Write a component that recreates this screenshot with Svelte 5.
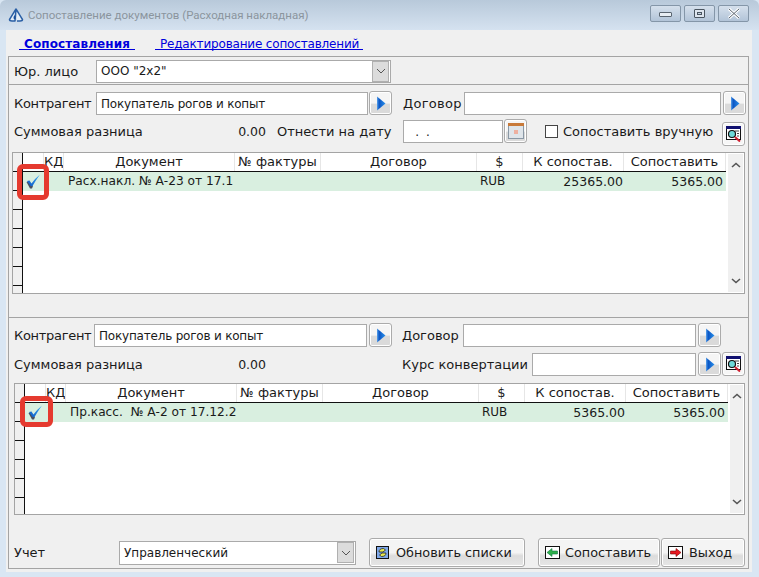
<script lang="ts">
  const columns = [
    { label: '', width: 21 },
    { label: 'КД', width: 20 },
    { label: 'Документ', width: 171 },
    { label: '№ фактуры', width: 86 },
    { label: 'Договор', width: 156 },
    { label: '$', width: 46 },
    { label: 'К сопостав.', width: 101 },
    { label: 'Сопоставить', width: 102 },
  ];

  const gridTemplate = columns.map((c) => c.width + 'px').join(' ');
  const ticks = (n: number) => Array.from({ length: n });
</script>

{#snippet arrowBtn()}
  <button class="btn-sq" aria-label="Выбрать">
    <svg width="10" height="15" viewBox="0 0 10 15">
      <defs>
        <linearGradient id="arr" x1="0" x2="1" y1="0" y2="0">
          <stop offset="0" stop-color="#5aa4ec" />
          <stop offset="0.25" stop-color="#0a55c4" />
          <stop offset="1" stop-color="#2a90ea" />
        </linearGradient>
      </defs>
      <path d="M1 0.5 L9.5 7.5 L1 14.5 Z" fill="url(#arr)" />
    </svg>
  </button>
{/snippet}

{#snippet searchBtn()}
  <button class="btn-sq search" aria-label="Поиск">
    <svg width="16" height="16" viewBox="0 0 16 16">
      <rect x="0.5" y="0.5" width="14" height="13" fill="#fff" stroke="#111" />
      <rect x="0" y="0" width="15" height="3" fill="#101070" />
      <path d="M9 5h4M11 7.5h2M11 10h2" stroke="#444" />
      <circle cx="6" cy="8" r="3.5" fill="#6fdada" stroke="#111" stroke-width="1.2" />
      <path d="M9 11 L14 15.5" stroke="#d02030" stroke-width="2" />
    </svg>
  </button>
{/snippet}

{#snippet chevron()}
  <span class="chevron">
    <svg width="10" height="6" viewBox="0 0 10 6"><path d="M1 1 L5 5 L9 1" fill="none" stroke="#555" stroke-width="1" /></svg>
  </span>
{/snippet}

{#snippet check()}
  <svg class="tick" width="15" height="15" viewBox="0 0 15 15">
    <defs>
      <linearGradient id="chk" x1="0" x2="1" y1="1" y2="0">
        <stop offset="0" stop-color="#0b56c4" />
        <stop offset="1" stop-color="#3fb0f5" />
      </linearGradient>
    </defs>
    <path d="M0.5 8 L3 7.5 L5 10 L7 12 L6 14.5 L4 14.5 Z" fill="#4a4f60" />
    <path d="M1 7 L3.5 6.5 L5.5 9.5 Q9 4.5 14 0.5 Q10 6 6.5 12 L4.5 12 Z" fill="url(#chk)" />
  </svg>
{/snippet}

{#snippet table(kind: string, rowCount: number, doc: string, toMatch: string)}
  <div class="table {kind}">
    <div class="ticks">
      {#each ticks(rowCount) as _}
        <span class="tick-row"></span>
      {/each}
    </div>
    <div class="rows">
      <div class="head" style="grid-template-columns:{gridTemplate}">
        {#each columns as c}
          <span class="th">{c.label}</span>
        {/each}
      </div>
      <div class="row" style="grid-template-columns:{gridTemplate}">
        <span class="td tick-cell">{@render check()}</span>
        <span class="td"></span>
        <span class="td doc">{doc}</span>
        <span class="td"></span>
        <span class="td"></span>
        <span class="td cur">RUB</span>
        <span class="td num">{toMatch}</span>
        <span class="td num last">5365.00</span>
      </div>
    </div>
    <div class="scroll">
      <svg width="10" height="6" viewBox="0 0 10 6"><path d="M1 5 L5 1.5 L9 5" fill="none" stroke="#555" stroke-width="1.6" /></svg>
      <svg width="10" height="6" viewBox="0 0 10 6"><path d="M1 1 L5 4.5 L9 1" fill="none" stroke="#555" stroke-width="1.6" /></svg>
    </div>
    <span class="mark"></span>
  </div>
{/snippet}

<div class="window">
  <header class="titlebar">
    <svg class="app-icon" width="16" height="16" viewBox="0 0 16 16">
      <path d="M8 2 C10 5 12 9 14.5 12.5 Q14.5 14 12 14 H9 M7 14 H4 Q1.5 14 1.5 12.5 C4 9 6 5 8 2 Z" fill="#e4edf6" stroke="#2a5fa5" stroke-width="1.5" stroke-linejoin="round" />
      <path d="M6.5 8 Q4.5 11 6.5 12.5 Q8.5 11 6.5 8 Z" fill="#1b4f9a" />
    </svg>
    <span class="title">Сопоставление документов (Расходная накладная)</span>
    <div class="win-btns">
      <span class="win-btn"><i class="min"></i></span>
      <span class="win-btn"><i class="max"></i></span>
      <span class="win-btn close">
        <svg width="14" height="11" viewBox="0 0 14 11"><path d="M2 1 L12 10 M12 1 L2 10" stroke="#fff" stroke-width="3" /><path d="M2 1 L12 10 M12 1 L2 10" stroke="#5a6570" stroke-width="1" /></svg>
      </span>
    </div>
  </header>

  <main class="body">
    <nav class="tabs">
      <a class="tab active" href="#a">Сопоставления</a>
      <a class="tab" href="#b">Редактирование сопоставлений</a>
    </nav>

    <section class="group org">
      <span class="lbl org-lbl">Юр. лицо</span>
      <div class="select org-select"><span>ООО "2х2"</span>{@render chevron()}</div>
    </section>

    <section class="group top">
      <div class="line l1">
        <span class="lbl party-lbl">Контрагент</span>
        <div class="input party">Покупатель рогов и копыт</div>
        {@render arrowBtn()}
        <span class="lbl contract-lbl">Договор</span>
        <div class="input contract"></div>
        {@render arrowBtn()}
      </div>
      <div class="line l2">
        <span class="lbl diff-lbl">Суммовая разница</span>
        <span class="amount">0.00</span>
        <span class="lbl date-lbl">Отнести на дату</span>
        <div class="input date">&nbsp;&nbsp;.&nbsp;&nbsp;.</div>
        <button class="btn-sq cal" aria-label="Календарь">
          <svg width="16" height="16" viewBox="0 0 16 16">
            <rect x="0.5" y="0.5" width="15" height="15" fill="#dfe5ea" stroke="#8a98a5" />
            <rect x="0" y="0" width="16" height="3" fill="#c87a3a" />
            <rect x="6" y="7" width="4" height="4" fill="#eeb0a0" />
          </svg>
        </button>
        <span class="box"></span>
        <span class="lbl manual">Сопоставить вручную</span>
        {@render searchBtn()}
      </div>
      {@render table('t1', 7, 'Расх.накл. № А-23 от 17.1', '25365.00')}
    </section>

    <section class="group bottom">
      <div class="line l3">
        <span class="lbl party-lbl2">Контрагент</span>
        <div class="input party2">Покупатель рогов и копыт</div>
        {@render arrowBtn()}
        <span class="lbl contract-lbl2">Договор</span>
        <div class="input contract2"></div>
        {@render arrowBtn()}
      </div>
      <div class="line l4">
        <span class="lbl diff-lbl">Суммовая разница</span>
        <span class="amount">0.00</span>
        <span class="lbl rate-lbl">Курс конвертации</span>
        <div class="input rate"></div>
        {@render arrowBtn()}
        {@render searchBtn()}
      </div>
      {@render table('t2', 7, 'Пр.касс.  № А-2 от 17.12.2', '5365.00')}
      <div class="line footer">
        <span class="lbl acc-lbl">Учет</span>
        <div class="select acc-select"><span>Управленческий</span>{@render chevron()}</div>
        <button class="btn refresh">
          <svg width="13" height="13" viewBox="0 0 13 13">
            <rect x="0.5" y="0.5" width="12" height="12" fill="#7fa8e8" stroke="#111" />
            <path d="M3 6 Q3 2.5 7.5 2.5 L9.5 4 L7 6 Z" fill="#e8e850" stroke="#222" stroke-width="0.8" />
            <path d="M10 7 Q10 10.5 5.5 10.5 L3.5 9 L6 7 Z" fill="#e8e850" stroke="#222" stroke-width="0.8" />
          </svg>
          Обновить списки
        </button>
        <button class="btn match">
          <svg width="15" height="15" viewBox="0 0 15 15">
            <rect x="0.5" y="1.5" width="14" height="12" fill="#fff" stroke="#111" />
            <path d="M2 7.5 L7 3.5 V6 H12.5 V9 H7 V11.5 Z" fill="#2eb04a" stroke="#174" stroke-width="0.6" />
          </svg>
          Сопоставить
        </button>
        <button class="btn exit">
          <svg width="15" height="15" viewBox="0 0 15 15">
            <rect x="0.5" y="1.5" width="14" height="12" fill="#fff" stroke="#111" />
            <path d="M13 7.5 L8 3.5 V6 H2.5 V9 H8 V11.5 Z" fill="#e81820" stroke="#700" stroke-width="0.6" />
          </svg>
          Выход
        </button>
      </div>
    </section>
  </main>
</div>

<style>
  :global(body) {
    margin: 0;
    background: #d9e6f3;
  }

  .window {
    width: 759px;
    height: 577px;
    display: flex;
    flex-direction: column;
    background: #d9e6f3;
    font-family: "DejaVu Sans", Verdana, sans-serif;
    font-size: 13px;
    color: #1a1a1a;
    overflow: hidden;
  }

  .titlebar {
    height: 30px;
    flex-shrink: 0;
    display: flex;
    align-items: center;
    padding-left: 8px;
    background: linear-gradient(#b8c9da, #d5e2f0);
    border-radius: 6px 6px 0 0;
  }

  .app-icon { margin-right: 4px; }

  .title {
    font-family: Roboto, sans-serif;
    font-size: 11.5px;
    color: #8b959e;
  }

  .win-btns {
    margin-left: auto;
    margin-right: 10px;
    margin-top: -4px;
    display: flex;
    gap: 3px;
  }

  .win-btn {
    width: 31px;
    height: 17px;
    box-sizing: border-box;
    border: 1px solid #8496a8;
    border-radius: 2px;
    background: linear-gradient(#d5e0ec, #b2c4d8);
    display: flex;
    align-items: center;
    justify-content: center;
  }

  .win-btn .min {
    width: 11px;
    height: 3px;
    margin-top: 3px;
    background: #e8eef4;
    border: 1px solid #5a6570;
    border-radius: 1px;
  }

  .win-btn .max {
    width: 9px;
    height: 7px;
    border: 1px solid #4a5560;
    box-shadow: inset 0 0 0 2px #dde5ee, inset 0 0 0 3px #4a5560;
    border-radius: 1px;
  }

  .body {
    flex: 1;
    margin: 0 7px 5px 6px;
    background: #f0f0f0;
    display: flex;
    flex-direction: column;
    min-height: 0;
    padding: 0 3px 3px 2px;
  }

  .tabs {
    height: 26px;
    flex-shrink: 0;
    display: flex;
    gap: 20px;
    padding-left: 11px;
    box-sizing: border-box;
    padding-top: 6px;
  }

  .tab {
    height: 13px;
    line-height: 17px;
    padding: 0 4px 0 5px;
    color: #0000dd;
    text-decoration: none;
    border-bottom: 1px solid #0000dd;
    font-size: 12px;
    letter-spacing: -0.18px;
  }

  .tab.active {
    font-weight: 700;
    letter-spacing: 0.1px;
    padding-right: 5px;
  }

  .group {
    border: 1px solid #a4a4a4;
    box-sizing: border-box;
    position: relative;
  }

  .org {
    height: 29px;
    display: flex;
    align-items: center;
    padding-left: 5px;
    padding-top: 1px;
  }

  .org-lbl { width: 82px; }

  .select {
    background: #fff;
    border: 1px solid #aaa;
    box-sizing: border-box;
    display: flex;
    align-items: center;
    padding-left: 4px;
    font-size: 12px;
  }

  .org-select { width: 295px; height: 23px; }
  .acc-select { width: 237px; height: 24px; }

  .chevron {
    margin-left: auto;
    width: 17px;
    height: 21px;
    margin-right: 1px;
    background: #dcdcdc;
    border: 1px solid #b0b0b0;
    box-sizing: border-box;
    display: flex;
    align-items: center;
    justify-content: center;
  }

  .top {
    height: 233px;
    border-top: 0;
    padding-top: 6px;
  }

  .bottom {
    flex: 1;
    border-top: 0;
    padding-top: 5px;
  }

  .line {
    display: flex;
    align-items: center;
    padding-left: 5px;
  }

  .l1, .l3 { height: 24px; }
  .l2 { height: 24px; margin-top: 4px; }
  .l4 { height: 24px; margin-top: 5px; }

  .lbl { white-space: nowrap; flex-shrink: 0; }

  .input {
    background: #fff;
    border: 1px solid #aaa;
    box-sizing: border-box;
    height: 23px;
    line-height: 22px;
    padding-left: 4px;
    flex-shrink: 0;
    font-size: 12px;
    letter-spacing: -0.2px;
  }

  .party-lbl { width: 82px; letter-spacing: -0.3px; }
  .party { width: 272px; margin-right: 1px; }
  .contract-lbl { margin-left: 11px; width: 61px; letter-spacing: 0.3px; }
  .contract { width: 257px; margin-right: 2px; }

  .party-lbl2 { width: 80px; letter-spacing: -0.3px; }
  .party2 { width: 273px; margin-right: 2px; }
  .contract-lbl2 { margin-left: 10px; width: 61px; }
  .contract2 { width: 233px; margin-right: 2px; }

  .diff-lbl { width: 199px; }
  .amount {
    width: 53px;
    padding-right: 11px;
    text-align: right;
    font-size: 12.5px;
  }

  .date-lbl { width: 126px; }
  .date { width: 100px; margin-right: 1px; }
  .cal { margin-right: 18px; }

  .box {
    width: 13px;
    height: 13px;
    box-sizing: border-box;
    border: 1px solid #444;
    background: #fff;
    margin-right: 5px;
    flex-shrink: 0;
  }

  .manual { width: 158px; }
  .l2 :global(.search) { margin-top: 5px; }

  .rate-lbl { margin-left: 125px; width: 130px; }
  .rate { width: 164px; margin-right: 2px; }

  .btn-sq {
    width: 23px;
    height: 24px;
    flex-shrink: 0;
    padding: 0;
    border: 1px solid #ababab;
    border-radius: 3px;
    background: linear-gradient(#f5f5f5 50%, #dadada 56%);
    box-shadow: inset 0 0 0 1px #fff;
    display: flex;
    align-items: center;
    justify-content: center;
  }

  .btn-sq.search { background: #f6f6f6; margin-left: 1px; }

  .table {
    position: relative;
    display: flex;
    background: #fff;
    border: 1px solid #a4a4a4;
    box-sizing: border-box;
    margin-top: 9px;
    margin-right: 3px;
  }

  .t1 { margin-left: 3px; height: 142px; }
  .t2 { margin-left: 5px; height: 132px; margin-top: 7px; }

  .ticks {
    width: 10px;
    flex-shrink: 0;
    box-sizing: border-box;
    border-right: 1px solid #111;
    background: #f0f0f0;
    overflow: hidden;
  }

  .tick-row {
    display: block;
    height: 19px;
    box-sizing: border-box;
    border-bottom: 1px solid #111;
    position: relative;
  }

  /* current-record pointer */
  .tick-row:nth-child(2)::before {
    content: "";
    position: absolute;
    right: 0;
    top: 7px;
    width: 3px;
    height: 4px;
    background: #111;
  }

  .rows { width: 703px; flex-shrink: 0; }

  .head, .row { display: grid; }

  .head {
    height: 19px;
    box-sizing: border-box;
    border-bottom: 1px solid #111;
  }

  .th {
    text-align: center;
    line-height: 18px;
    font-size: 13px;
    border-right: 1px solid #e6e6e6;
    white-space: nowrap;
    overflow: hidden;
  }

  .row {
    height: 19px;
    background: #d9efe0;
  }

  .td {
    line-height: 19px;
    font-size: 12.5px;
    white-space: pre;
    overflow: hidden;
  }

  .tick-cell {
    display: flex;
    align-items: center;
    padding-left: 3px;
  }

  .doc { padding-left: 4px; font-size: 12.2px; }
  .cur { padding-left: 3px; font-size: 12px; }
  .num { text-align: right; padding-right: 1px; }
  .last { padding-right: 3px; }

  .scroll {
    flex: 1;
    margin: 1px 1px 1px 2px;
    background: #f0f0f0;
    display: flex;
    flex-direction: column;
    justify-content: space-between;
    align-items: center;
    padding: 8px 0;
  }

  /* red marker drawn over the first grid row */
  .mark {
    position: absolute;
    left: 4px;
    top: 11px;
    width: 32px;
    height: 36px;
    box-sizing: border-box;
    border: 5px solid #e53a2f;
    border-radius: 6px;
  }

  .t2 .mark {
    left: 5px;
    top: 12px;
    width: 33px;
    height: 31px;
  }

  .footer {
    margin-top: 23px;
    height: 29px;
  }

  .acc-lbl { width: 105px; }

  .btn {
    height: 29px;
    box-sizing: border-box;
    font: inherit;
    font-size: 12.8px;
    color: #1a1a1a;
    padding: 0 0 0 6px;
    border: 1px solid #ababab;
    border-radius: 3px;
    background: linear-gradient(#f4f4f4 50%, #dcdcdc 62%, #e6e6e6);
    box-shadow: inset 0 0 0 1px #fff;
    display: flex;
    align-items: center;
    gap: 6px;
    flex-shrink: 0;
  }

  .refresh { width: 156px; margin-left: 13px; gap: 7px; }
  .match { width: 122px; margin-left: 13px; gap: 5px; }
  .exit { width: 84px; margin-left: 1px; }
</style>
